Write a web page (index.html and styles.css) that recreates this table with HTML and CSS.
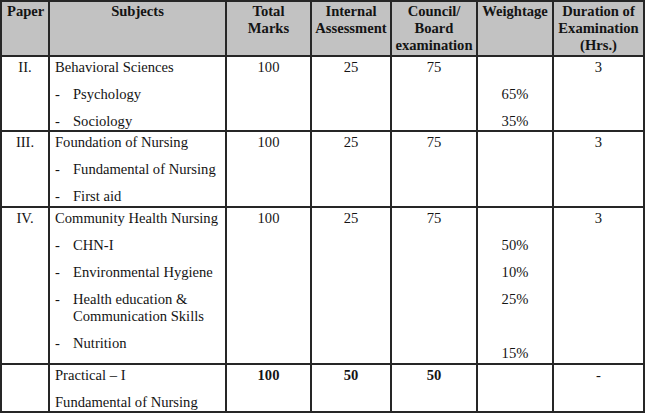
FILE: index.html
```html
<!DOCTYPE html>
<html>
<head>
<meta charset="utf-8">
<link rel="stylesheet" href="styles.css">
</head>
<body>
<table class="scheme">
  <colgroup>
    <col class="c-paper"><col class="c-subj"><col class="c-total"><col class="c-int"><col class="c-board"><col class="c-wt"><col class="c-dur">
  </colgroup>
  <thead>
    <tr class="r-head">
      <th class="left">Paper</th>
      <th>Subjects</th>
      <th>Total<br>Marks</th>
      <th>Internal<br>Assessment</th>
      <th>Council/<br>Board<br>examination</th>
      <th>Weightage</th>
      <th>Duration of<br>Examination<br>(Hrs.)</th>
    </tr>
  </thead>
  <tbody>
    <tr class="r-2">
      <td class="ctr">II.</td>
      <td class="subj">
        <div class="ln">Behavioral Sciences</div>
        <div class="ln item"><span class="dash">-</span><span>Psychology</span></div>
        <div class="ln item"><span class="dash">-</span><span>Sociology</span></div>
      </td>
      <td class="ctr">100</td>
      <td class="ctr">25</td>
      <td class="ctr">75</td>
      <td class="ctr">
        <div class="ln">&nbsp;</div>
        <div class="ln">65%</div>
        <div class="ln">35%</div>
      </td>
      <td class="ctr">3</td>
    </tr>
    <tr class="r-3">
      <td class="ctr">III.</td>
      <td class="subj">
        <div class="ln">Foundation of Nursing</div>
        <div class="ln item"><span class="dash">-</span><span>Fundamental of Nursing</span></div>
        <div class="ln item"><span class="dash">-</span><span>First aid</span></div>
      </td>
      <td class="ctr">100</td>
      <td class="ctr">25</td>
      <td class="ctr">75</td>
      <td class="ctr"></td>
      <td class="ctr">3</td>
    </tr>
    <tr class="r-4">
      <td class="ctr">IV.</td>
      <td class="subj">
        <div class="ln">Community Health Nursing</div>
        <div class="ln item"><span class="dash">-</span><span>CHN-I</span></div>
        <div class="ln item"><span class="dash">-</span><span>Environmental Hygiene</span></div>
        <div class="ln item"><span class="dash">-</span><span>Health education &amp;<br>Communication Skills</span></div>
        <div class="ln item"><span class="dash">-</span><span>Nutrition</span></div>
      </td>
      <td class="ctr">100</td>
      <td class="ctr">25</td>
      <td class="ctr">75</td>
      <td class="ctr">
        <div class="ln">&nbsp;</div>
        <div class="ln">50%</div>
        <div class="ln">10%</div>
        <div class="ln">25%</div>
        <div class="ln late">15%</div>
      </td>
      <td class="ctr">3</td>
    </tr>
    <tr class="r-5">
      <td></td>
      <td class="subj">
        <div class="ln">Practical – I</div>
        <div class="ln">Fundamental of Nursing</div>
      </td>
      <td class="ctr bold">100</td>
      <td class="ctr bold">50</td>
      <td class="ctr bold">50</td>
      <td></td>
      <td class="ctr">-</td>
    </tr>
  </tbody>
</table>
</body>
</html>
```

FILE: styles.css
```css
html, body {
  margin: 0;
  padding: 0;
  background: #ffffff;
}

.scheme {
  border-collapse: collapse;
  table-layout: fixed;
  width: 645px;
  font-family: "Liberation Serif", "Times New Roman", serif;
  font-size: 14.6px;
  line-height: 17px;
  color: #141414;
}

.c-paper { width: 48px; }
.c-subj  { width: 177px; }
.c-total { width: 85px; }
.c-int   { width: 80px; }
.c-board { width: 86px; }
.c-wt    { width: 76px; }
.c-dur   { width: 91px; }

.scheme th,
.scheme td {
  border: 2px solid #262626;
  vertical-align: top;
  padding: 0;
}

.scheme th {
  background: #c2c2c2;
  font-weight: bold;
  text-align: center;
  padding-top: 1px;
}

.scheme th.left {
  text-align: left;
  padding-left: 5px;
}

.r-head { height: 55px; }
.r-2 { height: 74px; }
.r-3 { height: 76px; }
.r-4 { height: 157px; }
.r-5 { height: 48px; }

.scheme td {
  padding-top: 2px;
}

.ctr { text-align: center; }
.bold { font-weight: bold; }

.scheme td.subj {
  padding-left: 5px;
  text-align: left;
}

.ln + .ln { margin-top: 10px; }
.ln.late { margin-top: 37px; }

.item {
  display: flex;
}

.dash {
  flex: 0 0 18px;
  width: 18px;
}
```
